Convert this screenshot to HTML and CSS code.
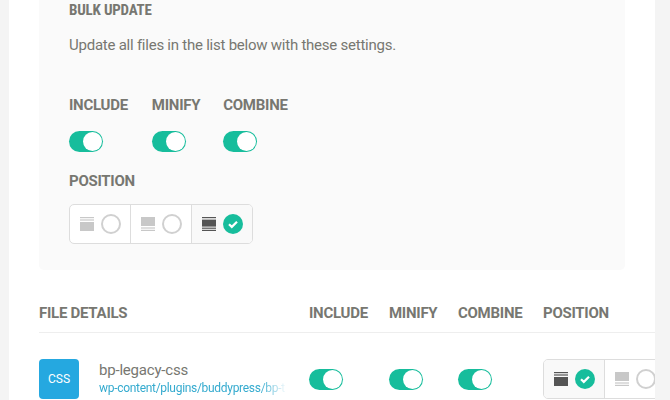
FILE: index.html
```html
<!DOCTYPE html>
<html lang="en">
<head>
    <meta charset="UTF-8">
    <title>Bulk Update</title>
    <link rel="stylesheet" href="styles.css">
</head>
<body>

<svg class="defs" width="0" height="0" aria-hidden="true">
    <symbol id="pos-header" viewBox="0 0 14 14">
        <rect x="0" y="0" width="14" height="1.2"/>
        <rect x="0" y="2.4" width="14" height="1.2"/>
        <rect x="0" y="5" width="14" height="9"/>
    </symbol>
    <symbol id="pos-footer" viewBox="0 0 14 14">
        <rect x="0" y="0" width="14" height="9"/>
        <rect x="0" y="10.4" width="14" height="1.2"/>
        <rect x="0" y="12.8" width="14" height="1.2"/>
    </symbol>
    <symbol id="pos-body" viewBox="0 0 14 14">
        <rect x="0" y="0" width="14" height="1.2"/>
        <rect x="0" y="2.6" width="14" height="7"/>
        <rect x="0" y="10.6" width="14" height="1.2"/>
        <rect x="0" y="12.8" width="14" height="1.2"/>
    </symbol>
    <symbol id="check" viewBox="0 0 20 20">
        <path d="M6 10.2l2.8 2.7L14 7.8" fill="none" stroke="#fff" stroke-width="2.2"/>
    </symbol>
</svg>

<div class="card">
    <div class="bulk">
        <h2 class="bulk-title">BULK UPDATE</h2>
        <p class="bulk-text">Update all files in the list below with these settings.</p>

        <div class="bulk-options">
            <div class="bulk-option">
                <span class="label">INCLUDE</span>
                <span class="toggle"></span>
            </div>
            <div class="bulk-option">
                <span class="label">MINIFY</span>
                <span class="toggle"></span>
            </div>
            <div class="bulk-option">
                <span class="label">COMBINE</span>
                <span class="toggle"></span>
            </div>
        </div>

        <div class="label bulk-position">POSITION</div>
        <div class="segments">
            <div class="segment">
                <svg class="pos-icon"><use href="#pos-header"/></svg>
                <span class="radio"></span>
            </div>
            <div class="segment">
                <svg class="pos-icon"><use href="#pos-footer"/></svg>
                <span class="radio"></span>
            </div>
            <div class="segment active">
                <svg class="pos-icon"><use href="#pos-body"/></svg>
                <span class="radio checked"><svg width="20" height="20"><use href="#check"/></svg></span>
            </div>
        </div>
    </div>

    <div class="table-head">
        <span class="label col-file">FILE DETAILS</span>
        <span class="label col-include">INCLUDE</span>
        <span class="label col-minify">MINIFY</span>
        <span class="label col-combine">COMBINE</span>
        <span class="label col-position">POSITION</span>
    </div>

    <div class="table-row">
        <div class="col-file file">
            <div class="file-badge">CSS</div>
            <div class="file-info">
                <div class="file-name">bp-legacy-css</div>
                <div class="file-path">wp-content/plugins/buddypress/bp-t</div>
            </div>
        </div>
        <div class="col-include"><span class="toggle"></span></div>
        <div class="col-minify"><span class="toggle"></span></div>
        <div class="col-combine"><span class="toggle"></span></div>
        <div class="col-position">
            <div class="segments">
                <div class="segment active">
                    <svg class="pos-icon"><use href="#pos-header"/></svg>
                    <span class="radio checked"><svg width="20" height="20"><use href="#check"/></svg></span>
                </div>
                <div class="segment">
                    <svg class="pos-icon"><use href="#pos-footer"/></svg>
                    <span class="radio"></span>
                </div>
            </div>
        </div>
    </div>
</div>

</body>
</html>
```

FILE: styles.css
```css
html, body {
    height: 400px;
    overflow: hidden;
}
body {
    margin: 0;
    background-color: #f4f4f4;
    font-family: Roboto, sans-serif;
    color: #777771;
}
.defs {
    position: absolute;
}
.card {
    width: 646px;
    height: 400px;
    margin-left: 9px;
    padding: 0 0 0 30px;
    box-sizing: border-box;
    background-color: white;
    overflow: hidden;
}
.bulk {
    width: 586px;
    height: 270px;
    padding: 0 30px;
    box-sizing: border-box;
    background-color: #fafafa;
    border-radius: 0 0 5px 5px;
}
.bulk-title {
    margin: 0;
    padding-top: 2px;
    font-size: 15px;
    line-height: 17px;
    font-weight: 700;
    font-stretch: 75%;
    letter-spacing: -0.2px;
}
.bulk-text {
    margin: 14px 0 0;
    font-size: 15px;
    line-height: 24px;
    letter-spacing: -0.24px;
    color: #777771;
}
.bulk-options {
    display: flex;
    margin-top: 38px;
}
.bulk-option {
    display: flex;
    flex-direction: column;
    align-items: flex-start;
    margin-right: 24px;
}
.bulk-option:nth-child(2) {
    margin-right: 23px;
}
.label {
    font-size: 15px;
    line-height: 20px;
    font-weight: 700;
    letter-spacing: -0.27px;
    color: #777771;
}
.toggle {
    display: block;
    position: relative;
    width: 34px;
    height: 21px;
    box-sizing: border-box;
    border-radius: 11px;
    background-color: #17bd9c;
}
.toggle::after {
    content: "";
    position: absolute;
    top: 1px;
    right: 1px;
    width: 19px;
    height: 19px;
    border-radius: 50%;
    background-color: white;
}
.bulk-option .toggle {
    margin-top: 16px;
}
.bulk-position {
    margin-top: 19px;
}
.segments {
    display: inline-flex;
    height: 40px;
    box-sizing: border-box;
    border: 1px solid #ddd;
    border-radius: 5px;
    background-color: white;
}
.bulk .segments {
    margin-top: 13px;
}
.segment {
    display: flex;
    align-items: center;
    width: 61px;
    padding-left: 10px;
    box-sizing: border-box;
    border-right: 1px solid #ddd;
}
.segment:last-child {
    width: 60px;
    border-right: 0;
}
.segment.active {
    background-color: #f9f9f9;
    border-radius: 4px 0 0 4px;
}
.segment:last-child.active {
    border-radius: 0 4px 4px 0;
}
.pos-icon {
    width: 14px;
    height: 14px;
    fill: #c8c8c8;
}
.active .pos-icon {
    fill: #555;
}
.radio {
    display: block;
    width: 20px;
    height: 20px;
    margin-left: 7px;
    box-sizing: border-box;
    border: 2px solid #d0d0d0;
    border-radius: 50%;
    background-color: white;
}
.radio.checked {
    border: 0;
    background-color: #17bd9c;
}
.table-head {
    display: flex;
    align-items: center;
    width: 616px;
    height: 63px;
    box-sizing: border-box;
    padding-top: 33px;
    padding-bottom: 9px;
    border-bottom: 1px solid #eee;
}
.table-row {
    display: flex;
    align-items: center;
    margin-top: 26px;
    height: 40px;
}
.col-file {
    width: 270px;
    flex: none;
}
.col-include {
    width: 80px;
    flex: none;
}
.col-minify {
    width: 69px;
    flex: none;
}
.col-combine {
    width: 85px;
    flex: none;
}
.file {
    display: flex;
}
.file-badge {
    width: 40px;
    height: 40px;
    flex: none;
    border-radius: 4px;
    background-color: #25a8e0;
    color: white;
    font-size: 12px;
    line-height: 40px;
    text-align: center;
}
.file-info {
    width: 188px;
    margin-left: 20px;
    overflow: hidden;
}
.file-name {
    padding-top: 1px;
    font-size: 15px;
    line-height: 20px;
    letter-spacing: -0.2px;
    color: #777771;
}
.file-path {
    font-size: 12px;
    line-height: 17px;
    letter-spacing: -0.3px;
    white-space: nowrap;
    overflow: hidden;
    color: #35abcf;
    -webkit-mask-image: linear-gradient(to right, black 160px, transparent 188px);
    mask-image: linear-gradient(to right, black 160px, transparent 188px);
}
```
